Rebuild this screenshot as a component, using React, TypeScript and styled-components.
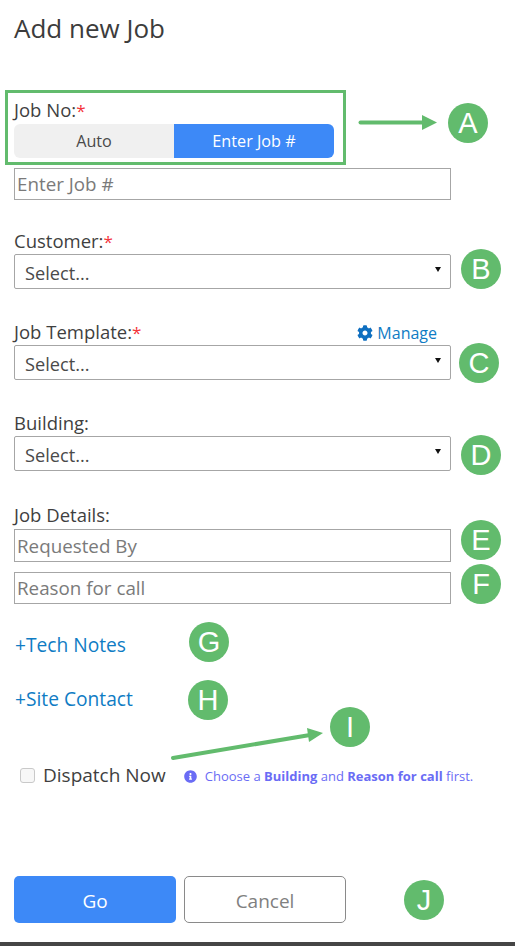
import React from "react";
import styled, { createGlobalStyle } from "styled-components";

const Global = createGlobalStyle`
  html, body { margin: 0; padding: 0; background: #fff; }
  body { font-family: "Open Sans", "Liberation Sans", sans-serif; color: #3f3f3f; overflow: hidden; }
  * { box-sizing: border-box; }
`;

const Page = styled.div`
  position: relative;
  width: 515px;
  height: 946px;
  display: flex;
  flex-direction: column;
  overflow: hidden;
`;

const Form = styled.form`
  flex: 1;
  padding: 12px 0 0 14px;
  display: flex;
  flex-direction: column;
  width: 480px;
`;

const Title = styled.h1`
  margin: 0;
  height: 34px;
  font-size: 26px;
  line-height: 33px;
  font-weight: 400;
  color: #3c3c3c;
  white-space: nowrap;
`;

const Field = styled.div<{ $top: number }>`
  margin-top: ${(p) => p.$top}px;
  display: flex;
  flex-direction: column;
`;

const LabelRow = styled.div<{ $h?: number }>`
  display: flex;
  width: 437px;
  justify-content: space-between;
  align-items: flex-start;
  height: ${(p) => p.$h ?? 25}px;
`;

const Label = styled.label`
  font-size: 18.5px;
  line-height: 24px;
  color: #3f3f3f;
  white-space: nowrap;
`;

const Req = styled.span`
  color: #f4333a;
  font-size: 17px;
`;

const ManageLink = styled.a`
  display: flex;
  align-items: center;
  gap: 4px;
  margin: 1px 14px 0 0;
  font-size: 16px;
  line-height: 24px;
  color: #0f7cc4;
`;

const Toggle = styled.div`
  display: flex;
  width: 320px;
  height: 34px;
  border-radius: 6px;
  overflow: hidden;
`;

const ToggleOption = styled.div<{ $active?: boolean }>`
  flex: 1;
  display: flex;
  align-items: center;
  justify-content: center;
  font-size: 16.2px;
  background: ${(p) => (p.$active ? "#3d89f7" : "#f0f0f0")};
  color: ${(p) => (p.$active ? "#fff" : "#4a4a4a")};
`;

const TextInput = styled.input<{ $top?: number; $h?: number }>`
  display: block;
  width: 437px;
  height: ${(p) => p.$h ?? 32}px;
  margin-top: ${(p) => p.$top ?? 0}px;
  padding: 0 2px;
  border: 1px solid #a6a6a6;
  border-radius: 0;
  font-family: inherit;
  font-size: 18.8px;
  outline: none;
  background: #fff;
  &::placeholder { color: #7a7a7a; opacity: 1; }
`;

const SelectBox = styled.div`
  display: flex;
  align-items: center;
  justify-content: space-between;
  width: 437px;
  height: 35px;
  padding: 3px 10px 0;
  border: 1px solid #a6a6a6;
  border-radius: 2px;
  font-size: 18.2px;
  color: #4a4a4a;
`;

const Caret = styled.span`
  width: 0;
  height: 0;
  margin-right: -1px;
  margin-top: -7px;
  border-left: 3px solid transparent;
  border-right: 3px solid transparent;
  border-top: 5px solid #111;
`;

const AddLink = styled.a<{ $top: number }>`
  display: block;
  margin-top: ${(p) => p.$top}px;
  padding-left: 1px;
  font-size: 19.2px;
  line-height: 26px;
  color: #0f7cc4;
  white-space: nowrap;
`;

const DispatchRow = styled.div`
  display: flex;
  align-items: center;
  margin-top: 50px;
  padding-left: 6px;
  height: 26px;
  width: 490px;
`;

const Check = styled.span`
  width: 15px;
  height: 15px;
  margin-right: 8px;
  border: 1px solid #c9c9c9;
  border-radius: 3px;
  background: #f7f7f7;
  flex: none;
`;

const DispatchLabel = styled.span`
  font-size: 19px;
  line-height: 26px;
  color: #3f3f3f;
  white-space: nowrap;
`;

const Hint = styled.div`
  display: flex;
  align-items: center;
  margin-left: 18px;
  margin-top: 2px;
  gap: 8px;
  font-size: 13px;
  line-height: 18px;
  color: #6a6cf5;
  white-space: nowrap;
`;

const Actions = styled.div`
  display: flex;
  gap: 8px;
  margin-top: 88px;
`;

const GoButton = styled.button`
  width: 162px;
  height: 47px;
  padding: 2px 0 0;
  border: 0;
  border-radius: 5px;
  background: #3d89f7;
  color: #fff;
  font-family: inherit;
  font-size: 19px;
`;

const CancelButton = styled.button`
  width: 162px;
  height: 47px;
  padding: 2px 0 0;
  border: 1px solid #8a8a8a;
  border-radius: 5px;
  background: #fff;
  color: #808080;
  font-family: inherit;
  font-size: 19px;
`;

const BottomBar = styled.div`
  height: 4px;
  background: #454545;
  flex: none;
`;

const Highlight = styled.div`
  position: absolute;
  left: 5px;
  top: 90px;
  width: 341px;
  height: 75px;
  border: 3px solid #62bb6d;
  pointer-events: none;
`;

const Badge = styled.div<{ $x: number; $y: number }>`
  position: absolute;
  left: ${(p) => p.$x - 20}px;
  top: ${(p) => p.$y - 20}px;
  width: 40px;
  height: 40px;
  border-radius: 50%;
  background: #62bb6d;
  color: #fff;
  display: flex;
  align-items: center;
  justify-content: center;
  font-family: "Liberation Sans", Arial, sans-serif;
  font-size: 29px;
  line-height: 1;
`;

const Overlay = styled.svg`
  position: absolute;
  left: 0;
  top: 0;
  pointer-events: none;
`;

const Gear = () => (
  <svg width="16" height="16" viewBox="0 0 512 512" fill="#0f6fc0">
    <path d="M487.4 315.7l-42.6-24.6c4.3-23.2 4.3-47 0-70.2l42.6-24.6c4.9-2.8 7.1-8.6 5.5-14-11.1-35.6-30-67.8-54.7-94.6-3.8-4.1-10-5.1-14.8-2.3L380.8 110c-17.9-15.4-38.5-27.3-60.8-35.1V25.8c0-5.6-3.9-10.5-9.4-11.7-36.7-8.2-74.3-7.8-109.2 0-5.5 1.2-9.4 6.1-9.4 11.7V75c-22.2 7.9-42.8 19.8-60.8 35.1L88.7 85.5c-4.9-2.8-11-1.9-14.8 2.3-24.7 26.7-43.6 58.9-54.7 94.6-1.7 5.4.6 11.2 5.5 14L67.3 221c-4.3 23.2-4.3 47 0 70.2l-42.6 24.6c-4.9 2.8-7.1 8.6-5.5 14 11.1 35.6 30 67.8 54.7 94.6 3.8 4.1 10 5.1 14.8 2.3l42.6-24.6c17.9 15.4 38.5 27.3 60.8 35.1v49.2c0 5.6 3.9 10.5 9.4 11.7 36.7 8.2 74.3 7.8 109.2 0 5.5-1.2 9.4-6.1 9.4-11.7v-49.2c22.2-7.9 42.8-19.8 60.8-35.1l42.6 24.6c4.9 2.8 11 1.9 14.8-2.3 24.7-26.7 43.6-58.9 54.7-94.6 1.5-5.5-.7-11.3-5.6-14.1zM256 336c-44.1 0-80-35.9-80-80s35.9-80 80-80 80 35.9 80 80-35.9 80-80 80z" />
  </svg>
);

const InfoIcon = () => (
  <svg width="13" height="13" viewBox="0 0 512 512" fill="#6a6cf5">
    <path d="M256 8C119 8 8 119 8 256s111 248 248 248 248-111 248-248S393 8 256 8zm0 110c23.2 0 42 18.8 42 42s-18.8 42-42 42-42-18.8-42-42 18.8-42 42-42zm56 254c0 6.6-5.4 12-12 12h-88c-6.6 0-12-5.4-12-12v-24c0-6.6 5.4-12 12-12h12v-64h-12c-6.6 0-12-5.4-12-12v-24c0-6.6 5.4-12 12-12h64c6.6 0 12 5.4 12 12v100h12c6.6 0 12 5.4 12 12v24z" />
  </svg>
);

const badges: [string, number, number][] = [
  ["A", 468, 123],
  ["B", 481, 269],
  ["C", 479, 363],
  ["D", 481, 455],
  ["E", 481, 540],
  ["F", 481, 584],
  ["G", 209, 642],
  ["H", 208, 700],
  ["I", 350, 727],
  ["J", 424, 900],
];

export default function App() {
  return (
    <>
      <Global />
      <Page>
        <Form>
          <Title>Add new Job</Title>
          <Field $top={52}>
            <LabelRow $h={26}>
              <Label>
                Job No:<Req>*</Req>
              </Label>
            </LabelRow>
            <Toggle>
              <ToggleOption>Auto</ToggleOption>
              <ToggleOption $active>Enter Job #</ToggleOption>
            </Toggle>
            <TextInput $top={10} placeholder="Enter Job #" />
          </Field>
          <Field $top={29}>
            <LabelRow>
              <Label>
                Customer:<Req>*</Req>
              </Label>
            </LabelRow>
            <SelectBox>
              Select...
              <Caret />
            </SelectBox>
          </Field>
          <Field $top={31}>
            <LabelRow>
              <Label>
                Job Template:<Req>*</Req>
              </Label>
              <ManageLink>
                <Gear />
                Manage
              </ManageLink>
            </LabelRow>
            <SelectBox>
              Select...
              <Caret />
            </SelectBox>
          </Field>
          <Field $top={31}>
            <LabelRow>
              <Label>Building:</Label>
            </LabelRow>
            <SelectBox>
              Select...
              <Caret />
            </SelectBox>
          </Field>
          <Field $top={32}>
            <LabelRow $h={26}>
              <Label>Job Details:</Label>
            </LabelRow>
            <TextInput $h={33} placeholder="Requested By" />
            <TextInput $top={10} placeholder="Reason for call" />
          </Field>
          <AddLink $top={28}>+Tech Notes</AddLink>
          <AddLink $top={28}>+Site Contact</AddLink>
          <DispatchRow>
            <Check />
            <DispatchLabel>Dispatch Now</DispatchLabel>
            <Hint>
              <InfoIcon />
              <span>
                Choose a <b>Building</b> and <b>Reason for call</b> first.
              </span>
            </Hint>
          </DispatchRow>
          <Actions>
            <GoButton type="button">Go</GoButton>
            <CancelButton type="button">Cancel</CancelButton>
          </Actions>
        </Form>
        <BottomBar />
        <Highlight />
        <Overlay width="515" height="946">
          <path d="M360.5 122.5H424" stroke="#62bb6d" strokeWidth="4" strokeLinecap="round" />
          <polygon points="422,115 437,122.5 422,130" fill="#62bb6d" />
          <path d="M173 758L310 735" stroke="#62bb6d" strokeWidth="4" strokeLinecap="round" />
          <polygon points="307,728 323,733 309,742" fill="#62bb6d" />
        </Overlay>
        {badges.map(([t, x, y]) => (
          <Badge key={t} $x={x} $y={y}>
            {t}
          </Badge>
        ))}
      </Page>
    </>
  );
}
